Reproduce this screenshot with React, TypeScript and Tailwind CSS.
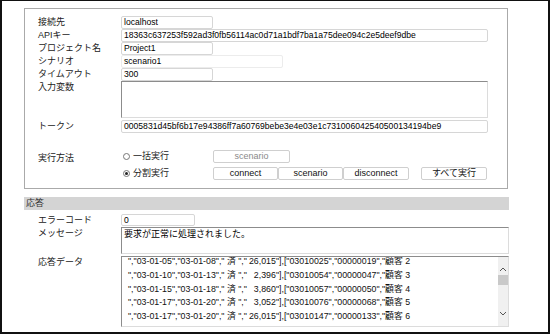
const font = "font-['Liberation_Sans','Noto_Sans_CJK_JP',sans-serif]";

function Field({ text, w, h = "h-[13px]" }: { text?: string; w: string; h?: string }) {
  return (
    <div
      className={`${w} ${h} border border-[#d6d6d6] rounded-[2px] bg-white px-[2px] text-[8.6px] leading-[11px] text-black whitespace-nowrap overflow-hidden`}
    >
      {text}
    </div>
  );
}

function Row({ label, children }: { label: string; children: React.ReactNode }) {
  return (
    <div className="flex items-start">
      <div className="w-[83px] shrink-0 text-[9px] leading-[13px] text-[#222]">{label}</div>
      {children}
    </div>
  );
}

function Btn({ label, w, dim = false }: { label: string; w: string; dim?: boolean }) {
  return (
    <div
      className={`${w} h-[13px] border border-[#cfcfcf] rounded-[2px] bg-white text-center text-[9px] leading-[11px] ${
        dim ? "text-[#8a8a8a]" : "text-[#111]"
      }`}
    >
      {label}
    </div>
  );
}

function Radio({ checked, label }: { checked?: boolean; label: string }) {
  return (
    <div className="flex items-center gap-[3px] w-[92px] pl-[2px] text-[9px] leading-[13px] text-[#222]">
      <span className="w-[7px] h-[7px] rounded-full border border-[#777] flex items-center justify-center">
        {checked && <span className="w-[3px] h-[3px] rounded-full bg-[#222]" />}
      </span>
      {label}
    </div>
  );
}

const lines = [
  ["05", "08", "26,015", "03010025", "00000019", "2"],
  ["10", "13", "2,396", "03010054", "00000047", "3"],
  ["15", "18", "3,860", "03010057", "00000050", "4"],
  ["17", "20", "3,052", "03010076", "00000068", "5"],
  ["17", "20", "26,015", "03010147", "00000133", "6"],
];

function Chevron({ up }: { up?: boolean }) {
  return (
    <svg width="8" height="5" viewBox="0 0 8 5" className="mx-auto">
      <polyline
        points={up ? "1,4 4,1 7,4" : "1,1 4,4 7,1"}
        fill="none"
        stroke="#555"
        strokeWidth="1"
      />
    </svg>
  );
}

export default function App() {
  return (
    <div className={`${font} w-[551px] h-[335px] bg-white`}>
      <div className="w-[550px] h-[334px] border-t border-l-2 border-r-2 border-b-2 border-[#111] pl-[22px] pt-[7px]">
        <div className="w-[484px] h-[181px] border border-[#aaaaaa] pl-[13px] pt-[7px] flex flex-col">
          <Row label="接続先">
            <Field text="localhost" w="w-[92px]" />
          </Row>
          <Row label="APIキー">
            <Field text="18363c637253f592ad3f0fb56114ac0d71a1bdf7ba1a75dee094c2e5deef9dbe" w="w-[367px]" />
          </Row>
          <Row label="プロジェクト名">
            <Field text="Project1" w="w-[92px]" />
          </Row>
          <Row label="シナリオ">
            <div className="w-[162px] h-[13px] border border-[#ececec] rounded-[2px] px-[2px] text-[8.6px] leading-[11px]">
              scenario1
            </div>
          </Row>
          <Row label="タイムアウト">
            <Field text="300" w="w-[92px]" />
          </Row>
          <Row label="入力変数">
            <div className="w-[367px] h-[37px] border border-[#dcdcdc] border-t-[#8c8c8c] border-l-[#8c8c8c] bg-white" />
          </Row>
          <div className="mt-[2px]">
            <Row label="トークン">
              <Field
                text="0005831d45bf6b17e94386ff7a60769bebe3e4e03e1c731006042540500134194be9"
                w="w-[367px]"
              />
            </Row>
          </div>
          <div className="mt-[17px] flex items-start">
            <div className="w-[83px] shrink-0 text-[9px] leading-[13px] text-[#222] pt-[2px]">実行方法</div>
            <div className="flex flex-col gap-[4px]">
              <div className="flex items-center">
                <Radio label="一括実行" />
                <Btn label="scenario" w="w-[77px]" dim />
              </div>
              <div className="flex items-center">
                <Radio checked label="分割実行" />
                <Btn label="connect" w="w-[65px]" />
                <Btn label="scenario" w="w-[65px]" />
                <Btn label="disconnect" w="w-[66px]" />
                <div className="ml-[12px]">
                  <Btn label="すべて実行" w="w-[66px]" />
                </div>
              </div>
            </div>
          </div>
        </div>

        <div className="mt-[8px] w-[485px] h-[13px] bg-[#d4d4d4] pl-[2px] text-[9px] leading-[13px] text-[#333]">
          応答
        </div>

        <div className="pl-[14px] pt-[4px] flex flex-col">
          <Row label="エラーコード">
            <Field text="0" w="w-[74px]" h="h-[12px]" />
          </Row>
          <Row label="メッセージ">
            <div className="w-[388px] h-[27px] border border-[#dcdcdc] border-t-[#8c8c8c] border-l-[#8c8c8c] px-[2px] text-[9px] leading-[12px]">
              要求が正常に処理されました。
            </div>
          </Row>
          <div className="mt-[2px]">
            <Row label="応答データ">
              <div className="w-[388px] h-[71px] border border-[#dcdcdc] border-t-[#8c8c8c] border-l-[#8c8c8c] flex">
                <div className="flex-1 overflow-hidden pl-[6px] text-[8.8px] leading-[13.8px] text-[#111] whitespace-pre">
                  <div className="-mt-[2px]">
                    {lines.map((l, i) => (
                      <div key={i} className="flex">
                        <span>{`","03-01-${l[0]}","03-01-${l[1]}"," 済 ","`}</span>
                        <span className="w-[29px] text-right">{l[2]}</span>
                        <span>{`"],["${l[3]}","${l[4]}","顧客 ${l[5]}`}</span>
                      </div>
                    ))}
                  </div>
                </div>
                <div className="w-[10px] bg-[#f0f0f0] flex flex-col pt-[10px] pb-[10px]">
                  <Chevron up />
                  <div className="mt-[3px] h-[10px] bg-[#c9c9c9]" />
                  <div className="flex-1" />
                  <Chevron />
                </div>
              </div>
            </Row>
          </div>
        </div>
      </div>
    </div>
  );
}
